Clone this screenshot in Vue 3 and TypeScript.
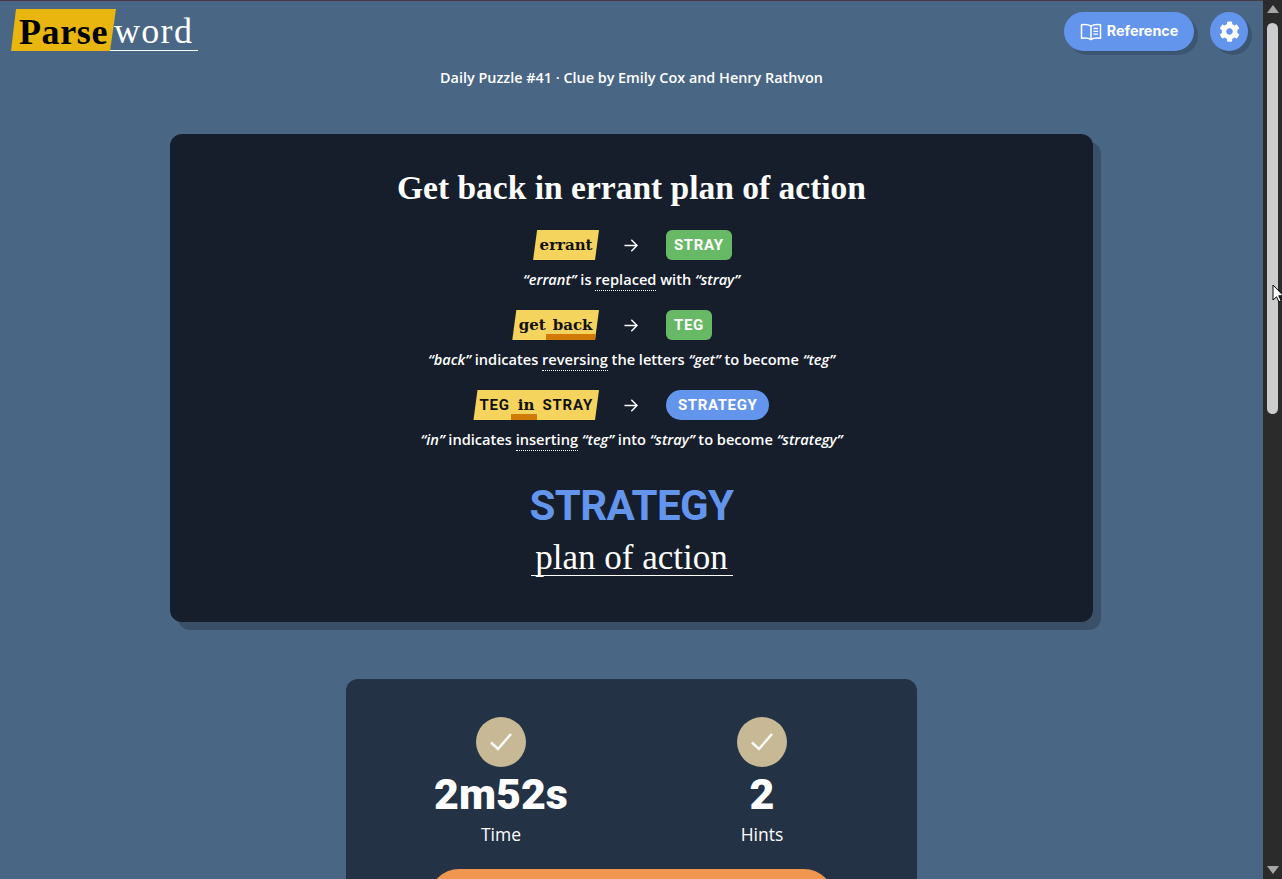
<script setup lang="ts">
interface Step {
  tag: 'plain' | 'reverse' | 'insert';
  result: string;
  done?: boolean;
  parts: { text: string; kind?: 'quote' | 'term' }[];
}

const steps: Step[] = [
  {
    tag: 'plain',
    result: 'STRAY',
    parts: [
      { text: '“errant”', kind: 'quote' },
      { text: ' is ' },
      { text: 'replaced', kind: 'term' },
      { text: ' with ' },
      { text: '“stray”', kind: 'quote' },
    ],
  },
  {
    tag: 'reverse',
    result: 'TEG',
    parts: [
      { text: '“back”', kind: 'quote' },
      { text: ' indicates ' },
      { text: 'reversing', kind: 'term' },
      { text: ' the letters ' },
      { text: '“get”', kind: 'quote' },
      { text: ' to become ' },
      { text: '“teg”', kind: 'quote' },
    ],
  },
  {
    tag: 'insert',
    result: 'STRATEGY',
    done: true,
    parts: [
      { text: '“in”', kind: 'quote' },
      { text: ' indicates ' },
      { text: 'inserting', kind: 'term' },
      { text: ' ' },
      { text: '“teg”', kind: 'quote' },
      { text: ' into ' },
      { text: '“stray”', kind: 'quote' },
      { text: ' to become ' },
      { text: '“strategy”', kind: 'quote' },
    ],
  },
];

const stats = [
  { value: '2m52s', label: 'Time' },
  { value: '2', label: 'Hints' },
];
</script>

<template>
  <div class="window">
    <div class="page">
      <header class="topbar">
        <div class="logo">
          <span class="logo-parse">Parse</span><span class="logo-word">word</span>
        </div>
        <div class="actions">
          <button class="ref-btn">
            <svg width="22" height="18" viewBox="0 0 22 18" fill="none" stroke="#fff" stroke-width="1.5">
              <path d="M11 3.2C9 1.8 5.500 1.300 1.500 1.800V15.200C5.500 14.700 9 15.200 11 16.500C13 15.200 16.500 14.700 20.500 15.200V1.800C16.500 1.300 13 1.800 11 3.200Z" stroke-linejoin="round" />
              <path d="M11 3.200V16.500" />
              <path d="M13.500 5.500H18M13.500 8.300H18M13.500 11.100H18" stroke-width="1.300" />
            </svg>
            <span class="ref-label">Reference</span>
          </button>
          <button class="gear-btn">
            <svg width="21" height="21" viewBox="0 0 512 512" fill="#fff">
              <path d="M487 316l-42-25c4-23 4-47 0-70l42-25c5-3 7-8 5-14-11-35-30-67-54-93-4-4-10-5-15-2l-42 25c-18-15-38-27-60-35V28c0-6-4-10-9-12-36-8-73-8-108 0-6 1-9 6-9 12v49c-22 8-42 20-60 35L93 88c-5-3-11-2-15 2-24 26-43 58-54 93-2 5 0 11 5 14l42 25c-4 23-4 47 0 70l-42 25c-5 3-7 8-5 14 11 35 30 67 54 93 4 4 10 5 15 2l42-25c18 15 38 27 60 35v49c0 6 4 10 9 12 36 8 73 8 108 0 6-1 9-6 9-12v-49c22-8 42-20 60-35l42 25c5 3 11 2 15-2 24-26 43-58 54-93 2-5 0-11-5-14zM256 336c-44 0-80-36-80-80s36-80 80-80 80 36 80 80-36 80-80 80z" />
            </svg>
          </button>
        </div>
      </header>

      <p class="byline">Daily Puzzle #41 · Clue by Emily Cox and Henry Rathvon</p>

      <section class="clue-card">
        <h1 class="clue">Get back in errant plan of action</h1>

        <div v-for="step in steps" :key="step.result" class="step">
          <div class="step-row">
            <div class="tag-cell">
              <div v-if="step.tag === 'plain'" class="tag"><span class="serif">errant</span></div>
              <div v-else-if="step.tag === 'reverse'" class="tag">
                <span class="serif">get</span><span class="serif ind">back</span>
              </div>
              <div v-else class="tag tag-long">
                <span class="mono">TEG</span><span class="serif ind">in</span><span class="mono">STRAY</span>
              </div>
            </div>
            <svg class="arrow" width="14" height="13" viewBox="0 0 14 13" fill="none" stroke="#fff" stroke-width="1.400">
              <path d="M0.500 6.500H13M7.300 0.800L13 6.500L7.300 12.200" />
            </svg>
            <div class="result-cell">
              <span class="result" :class="{ done: step.done }">{{ step.result }}</span>
            </div>
          </div>
          <p class="explain">
            <template v-for="(part, i) in step.parts" :key="i">
              <em v-if="part.kind === 'quote'">{{ part.text }}</em>
              <span v-else-if="part.kind === 'term'" class="term">{{ part.text }}</span>
              <template v-else>{{ part.text }}</template>
            </template>
          </p>
        </div>

        <div class="answer">STRATEGY</div>
        <div class="definition">plan of action</div>
      </section>

      <section class="stats-card">
        <div class="stats">
          <div v-for="stat in stats" :key="stat.label" class="stat">
            <div class="check">
              <svg width="24" height="20" viewBox="0 0 24 20" fill="none" stroke="#fff" stroke-width="2.400">
                <path d="M2 10.500L9 17L22 2" />
              </svg>
            </div>
            <div class="stat-value">{{ stat.value }}</div>
            <div class="stat-label">{{ stat.label }}</div>
          </div>
        </div>
        <div class="share-btn"></div>
      </section>
    </div>

    <aside class="scrollbar">
      <div class="scroll-arrow up"></div>
      <div class="thumb"></div>
      <div class="scroll-space"></div>
      <div class="scroll-arrow down"></div>
    </aside>

    <svg class="cursor" width="12" height="19" viewBox="0 0 12 19">
      <path d="M1 1V16L4.500 12.800L7 18L9.300 17L6.800 11.800H11.500Z" fill="#fff" stroke="#000" stroke-width="1" />
    </svg>
  </div>
</template>

<style>
html,
body {
  margin: 0;
  overflow: hidden;
}
</style>

<style scoped>
.window {
  display: flex;
  height: 879px;
  overflow: hidden;
  position: relative;
  background: #496685;
  color: #fff;
  font-family: "Open Sans", "Noto Sans", sans-serif;
}

.page {
  flex: 1;
  min-width: 0;
  border-top: 1px solid #4a3a44;
  box-sizing: border-box;
}

.topbar {
  display: flex;
  justify-content: space-between;
  align-items: flex-start;
  padding: 8px 15px 0 11px;
  height: 55px;
  box-sizing: border-box;
}

.logo {
  display: flex;
  align-items: flex-end;
  height: 42px;
  font-family: "Liberation Serif", serif;
  font-size: 36px;
}

.logo-parse {
  display: block;
  box-sizing: border-box;
  width: 105px;
  height: 42px;
  line-height: 46px;
  padding-left: 8px;
  font-weight: 700;
  color: #000;
  background: #e8b60e;
  clip-path: polygon(5px 0, 100% 0, calc(100% - 6px) 100%, 0 100%);
  letter-spacing: 0.6px;
}

.logo-word {
  display: block;
  height: 41px;
  line-height: 45px;
  margin-left: -6px;
  padding: 0 5px 0 4px;
  border-bottom: 1px solid #fff;
  letter-spacing: 1.300px;
}

.actions {
  display: flex;
  gap: 16px;
  padding-top: 3px;
}

.ref-btn {
  display: flex;
  align-items: center;
  justify-content: center;
  gap: 5px;
  width: 130px;
  height: 39px;
  border: 0;
  border-radius: 20px;
  background: #6495ed;
  color: #fff;
  font-family: "Inter", "Roboto", sans-serif;
  font-size: 14.300px;
  font-weight: 700;
  box-shadow: 4px 4px 0 #3c5570;
}

.ref-label {
  padding-bottom: 2px;
}

.gear-btn {
  display: flex;
  align-items: center;
  justify-content: center;
  width: 38px;
  height: 39px;
  padding: 0;
  border: 0;
  border-radius: 50%;
  background: #6495ed;
  box-shadow: 4px 4px 0 #3c5570;
}

.byline {
  margin: 12px 0 0;
  text-align: center;
  font-size: 14.400px;
  line-height: 20px;
  font-weight: 600;
}

.clue-card {
  width: 923px;
  height: 488px;
  margin: 46px auto 0;
  padding-top: 32px;
  box-sizing: border-box;
  border-radius: 12px;
  background: #161e2b;
  box-shadow: 8px 8px 0 #3a5068;
  text-align: center;
}

.clue {
  margin: 0 0 20px;
  font-family: "Liberation Serif", serif;
  font-size: 33.500px;
  line-height: 44px;
  font-weight: 700;
}

.step {
  height: 80px;
}

.step-row {
  display: grid;
  grid-template-columns: 1fr 67px 1fr;
  align-items: center;
  height: 30px;
  padding-left: 2px;
}

.tag-cell {
  display: flex;
  justify-content: flex-end;
}

.tag {
  display: flex;
  align-items: center;
  height: 30px;
  gap: 7px;
  padding: 0 6.500px;
  background: #f5d45e;
  color: #111;
  clip-path: polygon(4px 0, 100% 0, calc(100% - 4px) 100%, 0 100%);
}

.tag-long {
  gap: 8px;
  padding: 0 6px;
}

.serif {
  font-family: "DejaVu Serif", "Liberation Serif", serif;
  font-size: 15px;
  font-weight: 700;
  position: relative;
  line-height: 30px;
}

.mono {
  font-family: "Roboto", sans-serif;
  font-size: 15px;
  font-weight: 700;
  letter-spacing: 0.800px;
}

.ind::after {
  content: "";
  position: absolute;
  left: -7px;
  right: -3px;
  bottom: 0;
  height: 6px;
  background: #d17a08;
}

.arrow {
  justify-self: start;
  margin-left: 25px;
}

.result-cell {
  display: flex;
}

.result {
  display: block;
  height: 30px;
  line-height: 31px;
  padding: 0 8px;
  border-radius: 6px;
  background: #68b966;
  font-family: "Roboto", sans-serif;
  font-size: 15px;
  font-weight: 700;
  letter-spacing: 0.600px;
}

.result.done {
  padding: 0 12px;
  border-radius: 15px;
  background: #6495ed;
}

.explain {
  margin: 9px 0 0;
  font-size: 14.600px;
  line-height: 20px;
  font-weight: 600;
}

.explain em {
  font-style: italic;
}

.term {
  border-bottom: 1px dotted #fff;
  padding-bottom: 1px;
}

.answer {
  margin-top: 8px;
  color: #6495ed;
  font-family: "Roboto", sans-serif;
  font-size: 42px;
  line-height: 56px;
  font-weight: 700;
  letter-spacing: -0.600px;
}

.definition {
  width: 202px;
  margin: 2px auto 0;
  height: 40px;
  box-sizing: border-box;
  border-bottom: 1px solid #fff;
  font-family: "Liberation Serif", serif;
  font-size: 35px;
  line-height: 44px;
  white-space: nowrap;
}

.stats-card {
  width: 571px;
  height: 300px;
  margin: 57px auto 0;
  padding-top: 38px;
  box-sizing: border-box;
  border-radius: 12px;
  background: #233244;
}

.stats {
  display: grid;
  grid-template-columns: 261px 261px;
  justify-content: center;
}

.stat {
  display: flex;
  flex-direction: column;
  align-items: center;
}

.check {
  display: flex;
  align-items: center;
  justify-content: center;
  width: 50px;
  height: 50px;
  border-radius: 50%;
  background: #c8b996;
}

.stat-value {
  font-family: "Roboto", sans-serif;
  font-size: 43px;
  line-height: 54px;
  margin-bottom: 2px;
  font-weight: 900;
}

.stat-label {
  font-size: 17.500px;
  line-height: 23px;
}

.share-btn {
  width: 405px;
  height: 60px;
  margin: 23px auto 0;
  border-radius: 30px;
  background: #f0964f;
}

.scrollbar {
  display: flex;
  flex-direction: column;
  align-items: center;
  flex: none;
  width: 19px;
  background: #2b2b2b;
}

.scroll-arrow {
  flex: none;
  width: 0;
  height: 0;
  margin: 5px 0;
  border-left: 6px solid transparent;
  border-right: 6px solid transparent;
}

.scroll-arrow.up {
  border-bottom: 8px solid #a6a6a6;
}

.scroll-arrow.down {
  border-top: 8px solid #a6a6a6;
}

.thumb {
  flex: none;
  width: 11px;
  height: 391px;
  margin-top: 5px;
  border-radius: 6px;
  background: #cdcdcd;
}

.scroll-space {
  flex: 1;
}

.cursor {
  position: absolute;
  left: 1272px;
  top: 284px;
}
</style>
